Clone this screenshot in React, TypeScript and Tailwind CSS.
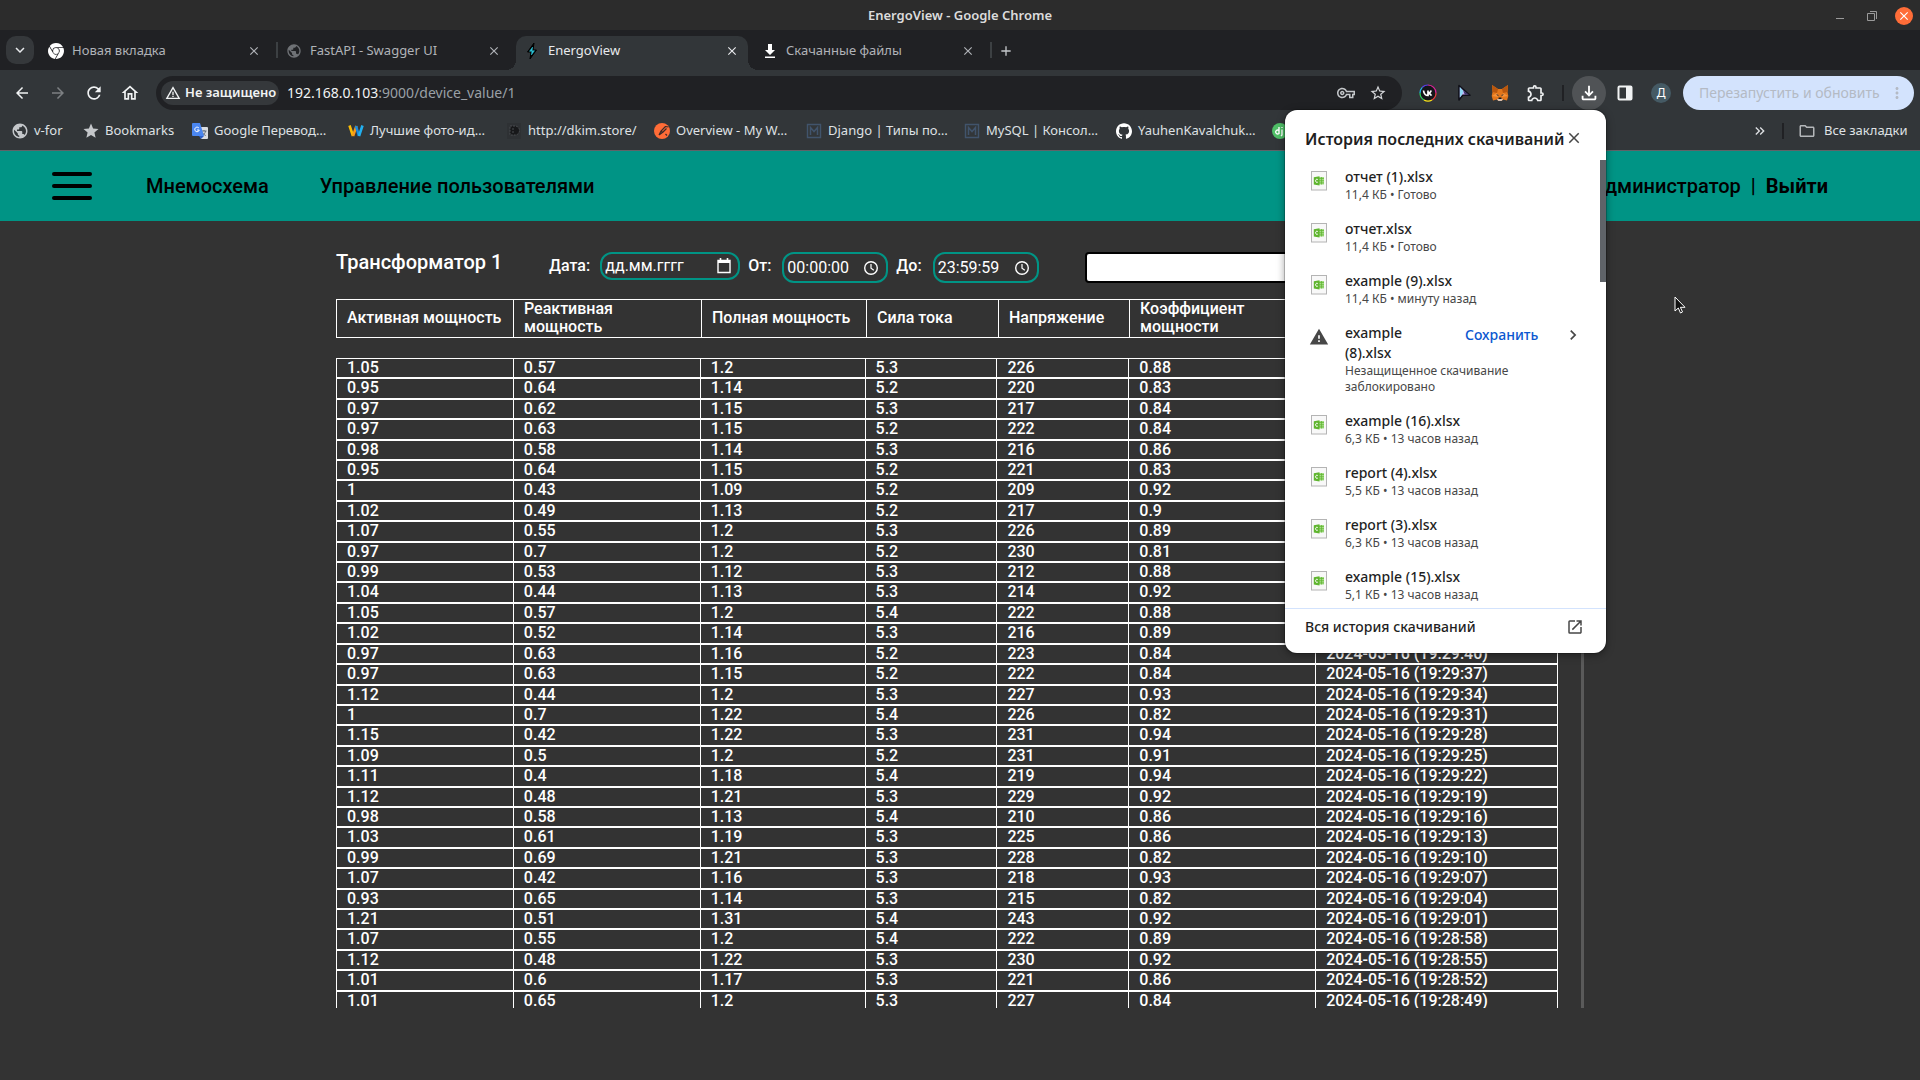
import React from "react";
import {
  MdAdd,
  MdArrowBack,
  MdArrowForward,
  MdClose,
  MdChevronRight,
  MdKeyboardArrowDown,
  MdKeyboardDoubleArrowRight,
  MdMoreVert,
  MdOpenInNew,
  MdOutlineExtension,
  MdOutlineFileDownload,
  MdOutlineFolder,
  MdOutlineHome,
  MdOutlineVpnKey,
  MdPublic,
  MdRefresh,
  MdStar,
  MdStarBorder,
  MdWarning,
  MdWarningAmber,
} from "react-icons/md";
import { SiGithub, SiGooglechrome } from "react-icons/si";

const columns = ["Активная мощность", "Реактивная мощность", "Полная мощность", "Сила тока", "Напряжение", "Коэффициент мощности", "Дата и время"];

const readings = [
  ["1.05", "0.57", "1.2", "5.3", "226", "0.88"],
  ["0.95", "0.64", "1.14", "5.2", "220", "0.83"],
  ["0.97", "0.62", "1.15", "5.3", "217", "0.84"],
  ["0.97", "0.63", "1.15", "5.2", "222", "0.84"],
  ["0.98", "0.58", "1.14", "5.3", "216", "0.86"],
  ["0.95", "0.64", "1.15", "5.2", "221", "0.83"],
  ["1", "0.43", "1.09", "5.2", "209", "0.92"],
  ["1.02", "0.49", "1.13", "5.2", "217", "0.9"],
  ["1.07", "0.55", "1.2", "5.3", "226", "0.89"],
  ["0.97", "0.7", "1.2", "5.2", "230", "0.81"],
  ["0.99", "0.53", "1.12", "5.3", "212", "0.88"],
  ["1.04", "0.44", "1.13", "5.3", "214", "0.92"],
  ["1.05", "0.57", "1.2", "5.4", "222", "0.88"],
  ["1.02", "0.52", "1.14", "5.3", "216", "0.89"],
  ["0.97", "0.63", "1.16", "5.2", "223", "0.84"],
  ["0.97", "0.63", "1.15", "5.2", "222", "0.84"],
  ["1.12", "0.44", "1.2", "5.3", "227", "0.93"],
  ["1", "0.7", "1.22", "5.4", "226", "0.82"],
  ["1.15", "0.42", "1.22", "5.3", "231", "0.94"],
  ["1.09", "0.5", "1.2", "5.2", "231", "0.91"],
  ["1.11", "0.4", "1.18", "5.4", "219", "0.94"],
  ["1.12", "0.48", "1.21", "5.3", "229", "0.92"],
  ["0.98", "0.58", "1.13", "5.4", "210", "0.86"],
  ["1.03", "0.61", "1.19", "5.3", "225", "0.86"],
  ["0.99", "0.69", "1.21", "5.3", "228", "0.82"],
  ["1.07", "0.42", "1.16", "5.3", "218", "0.93"],
  ["0.93", "0.65", "1.14", "5.3", "215", "0.82"],
  ["1.21", "0.51", "1.31", "5.4", "243", "0.92"],
  ["1.07", "0.55", "1.2", "5.4", "222", "0.89"],
  ["1.12", "0.48", "1.22", "5.3", "230", "0.92"],
  ["1.01", "0.6", "1.17", "5.3", "221", "0.86"],
  ["1.01", "0.65", "1.2", "5.3", "227", "0.84"],
];

const pad = (n: number) => String(n).padStart(2, "0");

/** Readings arrive every three seconds, newest first (19:30:22). */
const stamp = (row: number) => {
  const t = 19 * 3600 + 30 * 60 + 22 - row * 3;
  return `2024-05-16 (${pad(Math.floor(t / 3600))}:${pad(Math.floor(t / 60) % 60)}:${pad(t % 60)})`;
};

const downloads = [
  { name: "отчет (1).xlsx", info: "11,4 КБ • Готово" },
  { name: "отчет.xlsx", info: "11,4 КБ • Готово" },
  { name: "example (9).xlsx", info: "11,4 КБ • минуту назад" },
  { name: "example (8).xlsx", info: "Незащищенное скачивание заблокировано", blocked: true },
  { name: "example (16).xlsx", info: "6,3 КБ • 13 часов назад" },
  { name: "report (4).xlsx", info: "5,5 КБ • 13 часов назад" },
  { name: "report (3).xlsx", info: "6,3 КБ • 13 часов назад" },
  { name: "example (15).xlsx", info: "5,1 КБ • 13 часов назад" },
];

function BoltIcon() {
  return (
    <svg viewBox="0 0 16 16" className="size-4">
      <path d="M10 0 3.500 9H7L6 16l6.500-9H9z" fill="#000" stroke="#000" />
      <path d="M8.600 4 5.500 8.300h2.400L7.400 12l3.100-4.300H8.100z" fill="#2cc4d8" stroke="#2cc4d8" strokeWidth=".5" />
    </svg>
  );
}

function SavedIcon() {
  return (
    <svg viewBox="0 0 16 16" className="size-4" fill="#fff">
      <path d="M6 1h4v6h3l-5 5-5-5h3zM3 13.500h10V15H3z" />
    </svg>
  );
}

function TranslateIcon() {
  return (
    <svg viewBox="0 0 16 16" className="size-4">
      <path d="M6 4h9a1 1 0 0 1 1 1v10a1 1 0 0 1-1 1H9z" fill="#dadce0" />
      <path d="M9.500 8h5M12 7v1m-1.800 4.500c1.800-.8 3-2.400 3.300-4.500m-2.800 1.500c.6 1.400 1.700 2.500 3 3" stroke="#5f6b7a" fill="none" />
      <path d="M1 0h7l4 13H1a1 1 0 0 1-1-1V1a1 1 0 0 1 1-1z" fill="#4a86f0" />
      <path d="M7 5.200A2.300 2.300 0 1 0 7.300 7H5" stroke="#fff" fill="none" />
      <path d="M7 13h5l-3 3z" fill="#2d5fc4" />
    </svg>
  );
}

function WIcon() {
  return (
    <svg viewBox="0 0 16 16" className="size-4" fill="none" strokeWidth="2.600">
      <path d="M1.500 2.500 5 13" stroke="#fbbc04" />
      <path d="M5 13 8.500 3" stroke="#f79a1c" />
      <path d="m8 3 3 10" stroke="#1a8be0" />
      <path d="M11 13 14.500 2.500" stroke="#22b0f0" />
    </svg>
  );
}

function DarkBadgeIcon() {
  return (
    <svg viewBox="0 0 16 16" className="size-4">
      <path d="M1 0h14v16H1z" fill="#2e3134" />
      <path d="M4 3h5a4 4 0 0 1 0 9H4zm3 2v5" fill="#17181a" stroke="#4a4d50" strokeDasharray="2 1" />
    </svg>
  );
}

function PostmanIcon() {
  return (
    <svg viewBox="0 0 16 16" className="size-4">
      <circle cx="8" cy="8" r="8" fill="#ff6c37" />
      <path d="m5 12 2-4 4.500-4.500M7 8l1.500 1.500L5 12m3.500-2.500 4-4m-1-2 3 .5m-3 7 1.500 1.500" stroke="#3a2a28" strokeWidth="1.200" fill="none" />
    </svg>
  );
}

function MIcon() {
  return (
    <svg viewBox="0 0 16 16" className="size-4" fill="none" stroke="#41546c">
      <path d="M1.500 1.500h13v13h-13z" strokeWidth="1.400" />
      <path d="M4.500 12V4.500L8 8.500l3.500-4V12" strokeWidth="1.500" />
    </svg>
  );
}

function DjangoIcon() {
  return (
    <svg viewBox="0 0 16 16" className="size-4">
      <circle cx="8" cy="8" r="8" fill="#4fbf67" />
      <path d="M7 4v7M7 7.500a2 2 0 1 0 0 3M10 6.500V12l-1 1m1-9v1" stroke="#fff" strokeWidth="1.400" fill="none" />
    </svg>
  );
}

function VkIcon() {
  return (
    <svg viewBox="0 0 18 18" className="size-[18px]" fill="none" strokeWidth="1.200">
      <circle cx="9" cy="9" r="7.500" fill="#15161a" />
      <path d="M3.300 3.300A8 8 0 0 1 9 1" stroke="#5b3be8" />
      <path d="M9 1a8 8 0 0 1 8 8" stroke="#e0209a" />
      <path d="M17 9a8 8 0 0 1-4 7" stroke="#f03c3c" />
      <path d="M13 16a8 8 0 0 1-8 0" stroke="#f7e018" />
      <path d="M5 16a8 8 0 0 1-4-7" stroke="#2cd05a" />
      <path d="M1 9a8 8 0 0 1 2.300-5.700" stroke="#20b8f0" />
      <path d="M4.500 6.500c.4 3 1.800 5 4.500 5v-5m0 2.700c1.500 0 2.500-1 3.200-2.700M9 9.200c1.600.3 2.700 1 3.500 2.400" stroke="#fff" strokeWidth="1.700" />
    </svg>
  );
}

function PointerIcon() {
  return (
    <svg viewBox="0 0 14 18" className="h-[18px] w-3.5">
      <path d="M2 1.500v14.500l3.700-4.700h7.300z" fill="#c9a5f0" stroke="#101018" strokeWidth="1.600" strokeLinejoin="round" />
      <path d="M2.800 3v10.500L5.500 10l1-2.800z" fill="#8fd8f5" />
      <path d="m6 6 6 4.700H7.800z" fill="#3c3566" />
    </svg>
  );
}

function FoxIcon() {
  return (
    <svg viewBox="0 0 18 18" className="size-[18px]">
      <path d="m1 1 6 4h4l6-4-.5 7 .8 4-1.300 4.500L12 15.500 10.500 17h-3L6 15.500l-4 1L.7 12l.8-4z" fill="#e2761b" />
      <path d="m1 1 6 4-1 4-4.500-1zM17 1l-6 4 1 4 4.500-1z" fill="#b8570f" />
      <path d="m6 9 1 4-6-1zm6 0-1 4 6-1z" fill="#f5923a" />
      <path d="m5 10 2.500 1-.3 1.300zm8 0-2.500 1 .3 1.300z" fill="#2a3440" />
      <path d="m6 15.500 1.500-1.300h3l1.500 1.300-1.500 1.500h-3z" fill="#d7c1b3" />
      <path d="M7.700 13.500h2.600l.4 1.500H7.300z" fill="#161616" />
    </svg>
  );
}

function SidePanelIcon() {
  return (
    <svg viewBox="0 0 16 16" className="size-4" fill="none" stroke="#f1f3f4" strokeWidth="2">
      <rect x="1.500" y="1.500" width="13" height="13" rx="1" />
      <path d="M9 2h5v12H9z" fill="#f1f3f4" stroke="none" />
    </svg>
  );
}

function SheetIcon() {
  return (
    <svg viewBox="0 0 16 20" className="h-5 w-4">
      <rect x=".5" y=".5" width="15" height="18.500" fill="#f8f8f8" stroke="#b4b4b4" />
      <path d="M8 6h5v7.500H8z" fill="#a5dc86" />
      <path d="M8 7.500h5M8 9.700h5M8 11.900h5M10.500 6v7.500" stroke="#5fb52f" strokeWidth=".7" />
      <path d="m2.800 6.200 5.700-1v9.200l-5.700-1z" fill="#5fb52f" />
      <path d="M6.800 8.500a1.400 1.600 0 1 0 0 2.600" stroke="#fff" fill="none" />
    </svg>
  );
}

function CalendarIcon() {
  return (
    <svg viewBox="0 0 14 16" className="h-4 w-3.5" fill="none" stroke="#fff">
      <path d="M1 2.500h12v12H1z" strokeWidth="1.400" />
      <path d="M1 3.500h12" strokeWidth="3" />
      <path d="M3.500 0v3m7-3v3" strokeWidth="1.600" />
    </svg>
  );
}

function ClockIcon() {
  return (
    <svg viewBox="0 0 16 16" className="size-4" fill="none" stroke="#fff" strokeWidth="1.400">
      <circle cx="8" cy="8" r="6.300" />
      <path d="M8 4v4.200l2.800 2" strokeWidth="1.200" />
    </svg>
  );
}

const bookmarks = [
  { label: "v-for", width: "w-[71px]", icon: <MdPublic className="size-[18px] shrink-0 text-[#c4c7ca]" /> },
  { label: "Bookmarks", width: "w-[109px]", icon: <MdStar className="size-[18px] shrink-0 text-[#c4c7ca]" /> },
  { label: "Google Перевод…", width: "w-[156px]", icon: <TranslateIcon /> },
  { label: "Лучшие фото-ид…", width: "w-[158px]", icon: <WIcon /> },
  { label: "http://dkim.store/", width: "w-[148px]", icon: <DarkBadgeIcon /> },
  { label: "Overview - My W…", width: "w-[152px]", icon: <PostmanIcon /> },
  { label: "Django | Типы по…", width: "w-[158px]", icon: <MIcon /> },
  { label: "MySQL | Консол…", width: "w-[152px]", icon: <MIcon /> },
  { label: "YauhenKavalchuk…", width: "w-[156px]", icon: <SiGithub className="size-4 text-white" /> },
  { label: "", width: "w-4", icon: <DjangoIcon /> },
];

function TitleBar() {
  return (
    <div className="grid h-[30px] grid-cols-[1fr_auto_1fr] items-center bg-[#2c2c2c]">
      <div />
      <h1 className="text-[13px] font-semibold text-[#dcdcdc]">EnergoView - Google Chrome</h1>
      <div className="flex items-center justify-end pr-[7px]">
        <button aria-label="Свернуть" className="flex size-8 items-center justify-center">
          <svg viewBox="0 0 10 10" className="size-2.5" stroke="#9a9a9a"><path d="M1 7.500h8" /></svg>
        </button>
        <button aria-label="Развернуть" className="flex size-8 items-center justify-center">
          <svg viewBox="0 0 12 12" className="size-3" stroke="#9a9a9a" fill="none"><path d="M1.500 3.500h7v7h-7zM4 1.500h6.500V9" /></svg>
        </button>
        <button aria-label="Закрыть" className="ml-[7px] flex size-[18px] items-center justify-center rounded-full bg-[#ff6d38] text-white">
          <MdClose className="size-3.5" />
        </button>
      </div>
    </div>
  );
}

function Tab({ icon, title, active, divider }: { icon: React.ReactNode; title: string; active?: boolean; divider?: boolean }) {
  return (
    <div className="flex h-[34px] w-[238px] items-center">
      <div className={active ? "relative mr-1.5 flex h-full flex-1 items-center rounded-t-[10px] bg-[#323639] pr-[9px] pb-1 pl-2 text-[#e8eaed]" : "flex h-full flex-1 items-center pr-[15px] pb-1 pl-2 text-[#b0b3b8]"}>
        {active && (
          <>
            <span className="absolute bottom-0 -left-2.5 size-2.5 bg-[radial-gradient(circle_at_0_0,transparent_10px,#323639_10px)]" />
            <span className="absolute -right-2.5 bottom-0 size-2.5 bg-[radial-gradient(circle_at_100%_0,transparent_10px,#323639_10px)]" />
          </>
        )}
        {icon}
        <span className="ml-2 flex-1 truncate text-[13px]">{title}</span>
        <button aria-label="Закрыть вкладку"><MdClose className="size-3.5" /></button>
      </div>
      {divider && <span className="mb-1.5 h-4 w-0.5 bg-[#3c4043]" />}
    </div>
  );
}

function TabStrip() {
  return (
    <div className="flex h-10 items-end bg-[#202124] pl-1.5">
      <button aria-label="Поиск вкладок" className="mr-1.5 mb-1.5 flex size-7 items-center justify-center rounded-[10px] bg-[#35383b] text-[#e8eaed]">
        <MdKeyboardArrowDown className="size-[18px]" />
      </button>
      <Tab icon={<SiGooglechrome className="size-4 text-white" />} title="Новая вкладка" divider />
      <Tab icon={<MdPublic className="size-4 text-[#6f7276]" />} title="FastAPI - Swagger UI" />
      <Tab icon={<BoltIcon />} title="EnergoView" active />
      <Tab icon={<SavedIcon />} title="Скачанные файлы" divider />
      <button aria-label="Новая вкладка" className="flex h-[34px] w-7 items-center justify-center pb-1 text-[#c4c7ca]">
        <MdAdd className="size-4" />
      </button>
    </div>
  );
}

const toolButton = "flex size-9 shrink-0 items-center justify-center text-[#f1f3f4]";

function Toolbar() {
  return (
    <div className="flex h-[46px] items-center bg-[#323639] pr-1.5 pl-1">
      <button aria-label="Назад" className={toolButton}><MdArrowBack className="size-[18px]" /></button>
      <button aria-label="Вперёд" className={toolButton}><MdArrowForward className="size-[18px] text-[#7d8083]" /></button>
      <button aria-label="Обновить" className={toolButton}><MdRefresh className="size-5" /></button>
      <button aria-label="Главная" className={toolButton}><MdOutlineHome className="size-5" /></button>
      <div className="ml-2 flex h-[34px] flex-1 items-center rounded-full bg-[#202124] pr-2 pl-[5px]">
        <button className="flex h-6 w-[118px] shrink-0 items-center gap-1 rounded-full bg-[#35383b] px-1 text-[13px] font-semibold text-[#f1f3f4]">
          <MdWarningAmber className="size-4 shrink-0" />
          <span className="whitespace-nowrap">Не защищено</span>
        </button>
        <a href="#address" className="ml-2 flex-1 text-sm text-[#9aa0a6]">
          <span className="text-[#f1f3f4]">192.168.0.103</span>:9000/device_value/1
        </a>
        <button aria-label="Пароли" className="flex size-8 items-center justify-center text-[#c4c7ca]"><MdOutlineVpnKey className="size-[18px]" /></button>
        <button aria-label="В закладки" className="flex size-8 items-center justify-center text-[#d5d7da]"><MdStarBorder className="size-[18px]" /></button>
      </div>
      <div className="ml-2 flex items-center">
        <button aria-label="VK" className={toolButton}><VkIcon /></button>
        <button aria-label="Курсор" className={toolButton}><PointerIcon /></button>
        <button aria-label="MetaMask" className={toolButton}><FoxIcon /></button>
        <button aria-label="Расширения" className={toolButton}><MdOutlineExtension className="size-5" /></button>
        <span className="mx-2 h-4 w-0.5 bg-[#202124]" />
        <button aria-label="Скачанные файлы" className="mr-px flex size-[34px] items-center justify-center rounded-full bg-[#505356] text-white">
          <MdOutlineFileDownload className="size-[22px]" />
        </button>
        <button aria-label="Боковая панель" className={toolButton}><SidePanelIcon /></button>
        <button aria-label="Профиль" className={toolButton}>
          <span className="flex size-5 items-center justify-center rounded-full bg-[#455a64] text-xs text-white">Д</span>
        </button>
        <button className="ml-1 flex h-[34px] w-[231px] items-center justify-between rounded-full bg-[#d3e3fd] pr-2 pl-4 text-sm text-[#b4bac4]">
          <span className="whitespace-nowrap">Перезапустить и обновить</span>
          <MdMoreVert className="size-[18px] shrink-0" />
        </button>
      </div>
    </div>
  );
}

function BookmarksBar() {
  return (
    <nav className="flex h-[35px] items-center border-b border-[#5f6368] bg-[#323639] pb-1 pl-3 text-[13px] text-[#dfe1e4]">
      {bookmarks.map((b, i) => (
        <a key={i} href="#bookmark" className={`${b.width} flex shrink-0 items-center whitespace-nowrap`}>
          <span className="flex w-4 shrink-0 justify-center">{b.icon}</span>
          <span className="ml-1.5">{b.label}</span>
        </a>
      ))}
      <div className="ml-auto flex items-center pr-[13px]">
        <button aria-label="Другие закладки"><MdKeyboardDoubleArrowRight className="size-4" /></button>
        <span className="mx-3.5 h-4 w-0.5 bg-[#202124]" />
        <a href="#bookmarks" className="flex w-[109px] items-center gap-2 whitespace-nowrap">
          <MdOutlineFolder className="size-[18px] shrink-0 text-[#b4b7ba]" />
          Все закладки
        </a>
      </div>
    </nav>
  );
}

function SiteHeader() {
  return (
    <header className="flex h-[70px] items-center bg-[#009485] pr-[92px] pl-[52px] text-xl font-medium text-black">
      <button aria-label="Меню" className="flex w-10 flex-col gap-2">
        <span className="h-1 rounded-sm bg-black" />
        <span className="h-1 rounded-sm bg-black" />
        <span className="h-1 rounded-sm bg-black" />
      </button>
      <a href="#scheme" className="ml-[54px]">Мнемосхема</a>
      <a href="#users" className="ml-[51px]">Управление пользователями</a>
      <div className="ml-auto flex gap-2.5">
        <span>Администратор</span>
        <span>|</span>
        <a href="#logout" className="font-bold">Выйти</a>
      </div>
    </header>
  );
}

const field = "flex items-center rounded-xl border-2 border-[#009485] pr-[7px] pl-[3px]";

function Filters() {
  return (
    <form className="flex items-start gap-2">
      <h2 className="w-[205px] shrink-0 text-xl leading-5 font-medium">Трансформатор 1</h2>
      <label htmlFor="date" className="pt-1 pr-0.5 leading-5">Дата:</label>
      <div className={`${field} h-7 w-[140px]`}>
        <input id="date" defaultValue="дд.мм.гггг" className="w-0 flex-1 bg-transparent font-normal outline-none" />
        <CalendarIcon />
      </div>
      <label htmlFor="from" className="pt-1 pr-[3px] leading-5">От:</label>
      <div className={`${field} h-[31px] w-[106px]`}>
        <input id="from" defaultValue="00:00:00" className="w-0 flex-1 bg-transparent font-normal outline-none" />
        <ClockIcon />
      </div>
      <label htmlFor="to" className="pt-1 pr-[3px] leading-5">До:</label>
      <div className={`${field} h-[31px] w-[106px]`}>
        <input id="to" defaultValue="23:59:59" className="w-0 flex-1 bg-transparent font-normal outline-none" />
        <ClockIcon />
      </div>
      <input aria-label="Поиск" className="ml-[38px] h-[31px] flex-1 rounded border-2 border-black bg-white text-black" />
    </form>
  );
}

function HeaderCols() {
  return (
    <colgroup>
      <col className="w-[177px]" />
      <col className="w-[188px]" />
      <col className="w-[165px]" />
      <col className="w-[132px]" />
      <col className="w-[131px]" />
      <col className="w-[188px]" />
      <col className="w-[241px]" />
    </colgroup>
  );
}

function BodyCols() {
  return (
    <colgroup>
      <col className="w-[177px]" />
      <col className="w-[187px]" />
      <col className="w-[165px]" />
      <col className="w-[132px]" />
      <col className="w-[132px]" />
      <col className="w-[187px]" />
      <col className="w-[242px]" />
    </colgroup>
  );
}

function Measurements() {
  return (
    <>
      <div className="mt-4 pr-[26px]">
        <table className="w-full table-fixed border-separate border-spacing-0 border-r border-white">
          <HeaderCols />
          <thead>
            <tr className="h-[39px]">
              {columns.map((c) => (
                <th key={c} className="border-y border-l border-white px-2.5 pb-px text-left leading-[18px] font-medium">{c}</th>
              ))}
            </tr>
          </thead>
        </table>
      </div>
      <div className="mt-5 flex min-h-0 flex-1 items-start gap-[23px] overflow-hidden">
        <table className="h-[653px] flex-1 table-fixed border-separate border-spacing-0 border-r border-white">
          <BodyCols />
          <tbody>
            {readings.map((r, i) => (
              <tr key={i}>
                {[...r, stamp(i)].map((v, j) => (
                  <td key={j} className="border-y border-l border-white px-2.5 align-top leading-[18px]">{v}</td>
                ))}
              </tr>
            ))}
          </tbody>
        </table>
        <div className="w-[3px] self-stretch bg-[#5a5a5a]" />
      </div>
    </>
  );
}

function DownloadsPopup() {
  return (
    <aside className="absolute top-[110px] right-[314px] z-10 flex h-[543px] w-[321px] flex-col overflow-hidden rounded-xl bg-white font-['Noto_Sans',sans-serif] text-[#1f1f1f] shadow-[0_0_0_1px_#0003,0_2px_8px_#0006]">
      <div className="flex h-[50px] shrink-0 items-center justify-between pt-1.5 pr-[23px] pl-5">
        <h2 className="pt-0.5 text-base font-semibold whitespace-nowrap">История последних скачиваний</h2>
        <button aria-label="Закрыть"><MdClose className="size-[18px] text-[#474747]" /></button>
      </div>
      <div className="flex min-h-0 flex-1 overflow-hidden">
        <ul className="flex-1">
          {downloads.map((d) => (
            <li key={d.name} className="flex pt-[7px] pb-[9px] pl-[26px]">
              <span className="mt-1 mr-[18px] flex h-5 w-4 shrink-0 items-center justify-center">
                {d.blocked ? <MdWarning className="size-5 shrink-0 text-[#474747]" /> : <SheetIcon />}
              </span>
              <div className={d.blocked ? "flex-1" : "whitespace-nowrap"}>
                <div className="flex items-start">
                  <p className={d.blocked ? "w-[84px] text-sm leading-5 font-medium" : "text-sm leading-5 font-medium"}>{d.name}</p>
                  {d.blocked && (
                    <>
                      <button className="ml-9 text-sm leading-6 font-medium text-[#0b57d0]">Сохранить</button>
                      <button aria-label="Подробнее" className="mr-[17px] ml-auto pt-0.5"><MdChevronRight className="size-5 text-[#474747]" /></button>
                    </>
                  )}
                </div>
                <p className={d.blocked ? "w-[165px] text-xs leading-4 text-[#474747]" : "text-xs leading-4 text-[#474747]"}>{d.info}</p>
              </div>
            </li>
          ))}
        </ul>
        <div className="h-[122px] w-1.5 bg-[#5f6368]" />
      </div>
      <a href="#downloads" className="flex h-[45px] shrink-0 items-center justify-between border-t border-[#d3e3fd] pr-[22px] pb-2 pl-5 text-sm font-medium">
        Вся история скачиваний
        <MdOpenInNew className="size-[18px] text-[#474747]" />
      </a>
    </aside>
  );
}

export default function App() {
  return (
    <div className="relative flex h-screen flex-col overflow-hidden bg-[#333333]">
      <div className="shrink-0 font-['Noto_Sans',sans-serif]">
        <TitleBar />
        <TabStrip />
        <Toolbar />
        <BookmarksBar />
      </div>
      <div className="flex min-h-0 flex-1 flex-col font-[Roboto,sans-serif] font-medium text-white">
        <SiteHeader />
        <main className="mx-auto flex min-h-0 w-[65%] flex-1 flex-col pt-[31px] pb-[72px]">
          <Filters />
          <Measurements />
        </main>
      </div>
      <DownloadsPopup />
      <svg viewBox="0 0 12 19" className="absolute top-[296px] left-[1674px] h-[19px] w-3">
        <path d="M1 1v14l3.300-3 2.200 5 2-1-2.100-4.700H11z" fill="#111" stroke="#fff" />
      </svg>
    </div>
  );
}
